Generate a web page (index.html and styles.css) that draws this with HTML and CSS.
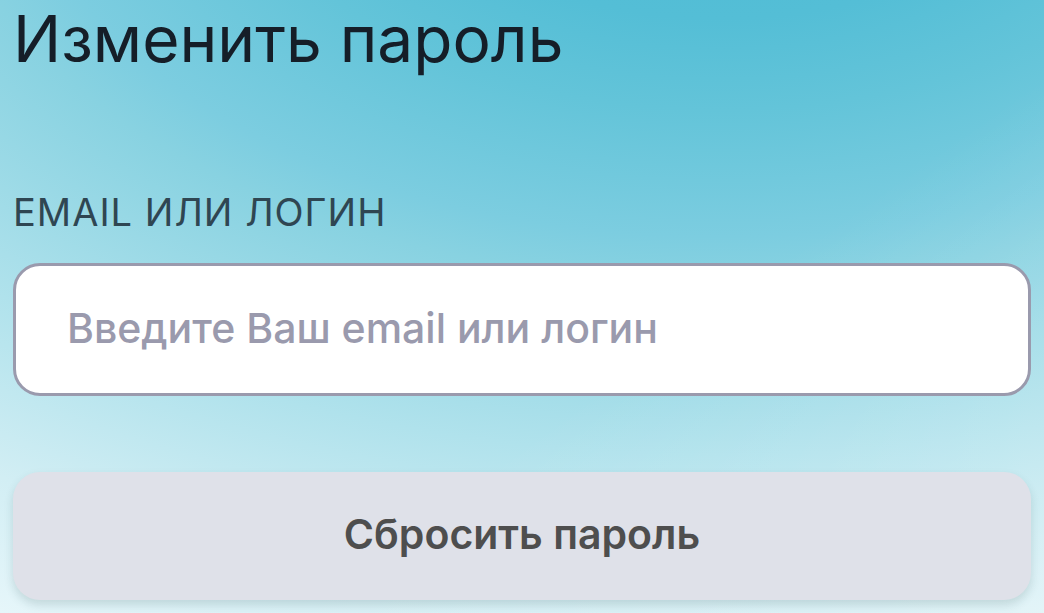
FILE: index.html
```
<!DOCTYPE html>
<html lang="ru">
<head>
<meta charset="utf-8">
<meta name="viewport" content="width=device-width, initial-scale=1">
<title>Изменить пароль</title>
<link rel="stylesheet" href="styles.css">
</head>
<body>
<main class="page">
<h1 class="title">Изменить пароль</h1>
<form class="form">
<label class="label" for="login">Email или логин</label>
<input class="input" id="login" name="login" type="text" placeholder="Введите Ваш email или логин">
<button class="submit" type="submit">Сбросить пароль</button>
</form>
</main>
</body>
</html>
```

FILE: styles.css
```
* {
  box-sizing: border-box;
}

body {
  margin: 0;
  min-height: 100vh;
  font-family: Inter, "Liberation Sans", sans-serif;
  background:
    linear-gradient(145deg, rgba(255, 255, 255, 0) 60%, rgba(255, 255, 255, 0.28) 100%),
    radial-gradient(ellipse 150% 148% at 69% -28%, #4abbd4 0%, #54bed6 21%, #63c4d9 31%, #7ccde0 45%, #88d2e1 50%, #b0e2ec 69%, #d2eef4 85%, #e6f6fa 98%);
}

.page {
  padding: 0 13px 13px;
}

.title {
  margin: 0;
  font-size: 64px;
  line-height: 78px;
  font-weight: 400;
  color: #151e28;
}

.form {
  display: flex;
  flex-direction: column;
  margin-top: 110px;
}

.label {
  font-size: 38px;
  line-height: 48px;
  letter-spacing: 1px;
  text-transform: uppercase;
  color: #2f4652;
}

.input {
  width: 100%;
  height: 133px;
  margin-top: 27px;
  padding: 0 51px 4px;
  border: 3px solid #9a9aad;
  border-radius: 27px;
  background: #fff;
  font: 500 41px/48px Inter, "Liberation Sans", sans-serif;
  color: #151e28;
}

.input::placeholder {
  color: #9a9aad;
  opacity: 1;
}

.submit {
  height: 128px;
  margin-top: 76px;
  padding: 0 0 4px;
  border: 0;
  border-radius: 27px;
  background: #dfe1e9;
  box-shadow: 0 5px 10px rgba(20, 60, 60, 0.15);
  font: 600 41px/48px Inter, "Liberation Sans", sans-serif;
  color: #4e4e4e;
}
```
